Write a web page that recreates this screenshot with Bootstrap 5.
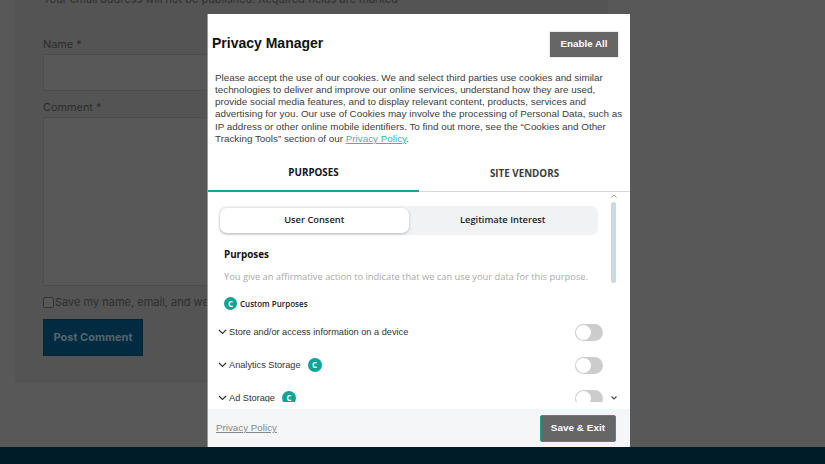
<!DOCTYPE html>
<html lang="en">
<head>
<meta charset="utf-8">
<title>Privacy Manager</title>
<link href="https://cdn.jsdelivr.net/npm/bootstrap@5.3.0/dist/css/bootstrap.min.css" rel="stylesheet">
<style>
html,body{height:100%}
body{background:#585858;overflow:hidden;font-family:"Inter","Liberation Sans",sans-serif;color:#2f2f2f}
.page-shell{height:464px;display:flex;flex-direction:column;overflow:hidden}
.page-main{flex:1 1 auto;min-height:0;overflow:hidden;padding-left:15px}
.comment-panel{width:593px;height:383px;background:#545454;padding:0 28px;display:flex;flex-direction:column}
.email-note{font-size:11px;line-height:16px;margin-top:-9px;margin-bottom:0;white-space:nowrap;height:16px}
.form-label-dim{font-size:10.9px;line-height:16px;margin:0 0 2px;color:#2c2c2c}
.form-label-name{margin-top:29px}
.form-label-comment{margin-top:8px}
.dim-input{height:37px;width:100%;background:#585858;border:1px solid #4c4c4c;border-radius:2px}
.dim-area{height:169px}
.save-line{display:flex;align-items:center;gap:1px;margin-top:8px;font-size:11px;line-height:16px;white-space:nowrap;overflow:hidden}
.dim-box{width:11px;height:11px;border:1px solid #333;border-radius:2px;flex:none;background:#585858}
.post-btn{margin-top:9px;width:100px;height:37px;background:#002b40;border:1px solid #00263a;color:#57656d;font-weight:700;font-size:11px;display:flex;align-items:center;justify-content:center}
.site-foot{height:17px;flex:none;background:#001c29}
.pm-modal{position:fixed;left:207px;top:14px;width:423px;height:433px;background:#fff;border-left:1px solid #9a9a9a;display:flex;flex-direction:column;font-family:"Liberation Sans",sans-serif;overflow:hidden}
.pm-head{display:flex;justify-content:space-between;align-items:center;padding:18px 12px 0 4px;height:43px}
.pm-title{font-size:14px;font-weight:700;color:#111;margin:0 0 2px}
.btn-enable{width:68px;height:25px;background:#666;color:#fff;border:0;border-radius:0;font-size:9.8px;font-weight:700;padding:0;box-shadow:0 0 1px #888}
.pm-intro{margin:15px 4px 0 7px;font-size:9.85px;line-height:12.15px;color:#3d3d3d}
.pm-intro a{color:#3bb8ac}
.pm-tabs{display:flex;margin-top:13px;height:34px;border-bottom:1px solid #d8d8d8;font-family:"Open Sans",sans-serif;font-weight:700;font-size:9.8px}
.pm-tab{flex:0 0 50%;display:flex;align-items:center;justify-content:center;color:#3c3c3c;padding-bottom:1px}
.pm-tab-on{color:#111;border-bottom:2px solid #17a398;margin-bottom:-1px}
.pm-body{position:relative;height:217px;flex:none;overflow:hidden;padding:14px 32px 0 11px}
.seg-wrap{display:flex;height:29px;background:#f0f2f4;border-radius:7px;padding:2px 1px;font-family:"Open Sans",sans-serif;font-weight:600;font-size:9.3px;color:#222}
.seg-item{flex:1 1 50%;display:flex;align-items:center;justify-content:center}
.seg-on{background:#fff;border-radius:7px;box-shadow:0 1px 3px rgba(0,0,0,.25)}
.pur-title{font-family:"Open Sans",sans-serif;font-weight:700;font-size:9.8px;line-height:14px;color:#111;margin:13px 0 0 5px}
.pur-desc{font-family:"Open Sans",sans-serif;font-size:9.3px;line-height:14px;color:#aaa;margin:8px 0 0 5px;white-space:nowrap}
.pur-custom{display:flex;align-items:center;gap:3px;margin:13px 0 0 5px;font-family:"Open Sans",sans-serif;font-weight:600;font-size:8px;color:#222;height:14px}
.c-mark{width:14px;height:14px;border-radius:50%;background:#0aa595;color:#fff;display:inline-flex;align-items:center;justify-content:center;font-family:"Open Sans",sans-serif;font-weight:700;font-size:8px;flex:none}
.pur-custom .c-mark{width:13px;height:13px}
.pur-row{display:flex;align-items:center;height:17px;margin-top:16px;margin-right:-6px;font-size:9.2px;color:#333;margin-left:-1px}
.pur-row-first{margin-top:13px}
.pur-label{display:flex;align-items:center;gap:2px;flex:1 1 auto}
.pur-label .c-mark{margin-left:5px}
.tgl{width:28px;height:17px;background:#ccc;border-radius:9px;position:relative;flex:none;margin-right:1px}
.tgl::after{content:"";position:absolute;left:1px;top:1px;width:15px;height:15px;border-radius:50%;background:#fff}
.pm-clip{position:absolute;left:0;right:0;bottom:0;height:7px;background:#fff}
.sb-thumb{position:absolute;left:403px;top:10px;width:5px;height:81px;background:#cbd7e2;border-radius:3px}
.sb-up{position:absolute;left:403px;top:2px}
.sb-down{position:absolute;left:403px;bottom:9px}
.pm-foot{flex:1 1 auto;background:#f5f6f8;display:flex;align-items:center;justify-content:space-between;padding:1px 14px 0 8px}
.pm-foot a{color:#888;font-size:9.8px}
.btn-save{width:76px;height:27px;background:#666;color:#fff;border:1px solid #1f9e92;border-radius:2px;font-size:9.8px;font-weight:700;padding:0;letter-spacing:.1px}
</style>
</head>
<body>
<div class="page-shell">
  <main class="page-main">
    <section class="comment-panel">
      <p class="email-note">Your email address will not be published. Required fields are marked *</p>
      <p class="form-label-dim form-label-name">Name *</p>
      <div class="dim-input"></div>
      <p class="form-label-dim form-label-comment">Comment *</p>
      <div class="dim-input dim-area"></div>
      <div class="save-line"><span class="dim-box"></span><span>Save my name, email, and website in this browser for the next time I comment.</span></div>
      <div class="post-btn">Post Comment</div>
    </section>
  </main>
  <footer class="site-foot"></footer>
</div>

<div class="pm-modal" role="dialog">
  <div class="pm-head">
    <h1 class="pm-title">Privacy Manager</h1>
    <button class="btn btn-enable" type="button">Enable All</button>
  </div>
  <p class="pm-intro">Please accept the use of our cookies. We and select third parties use cookies and similar technologies to deliver and improve our online services, understand how they are used, provide social media features, and to display relevant content, products, services and advertising for you. Our use of Cookies may involve the processing of Personal Data, such as IP address or other online mobile identifiers. To find out more, see the “Cookies and Other Tracking Tools” section of our <a href="#">Privacy Policy</a>.</p>
  <div class="pm-tabs">
    <div class="pm-tab pm-tab-on">PURPOSES</div>
    <div class="pm-tab">SITE VENDORS</div>
  </div>
  <div class="pm-body">
    <div class="seg-wrap">
      <div class="seg-item seg-on">User Consent</div>
      <div class="seg-item">Legitimate Interest</div>
    </div>
    <div class="pur-title">Purposes</div>
    <div class="pur-desc">You give an affirmative action to indicate that we can use your data for this purpose.</div>
    <div class="pur-custom"><span class="c-mark">C</span>Custom Purposes</div>
    <div class="pur-row pur-row-first">
      <div class="pur-label"><svg width="9" height="6" viewBox="0 0 9 6"><path d="M1 1l3.500 3.500L8 1" fill="none" stroke="#333" stroke-width="1.2"/></svg>Store and/or access information on a device</div>
      <span class="tgl"></span>
    </div>
    <div class="pur-row">
      <div class="pur-label"><svg width="9" height="6" viewBox="0 0 9 6"><path d="M1 1l3.500 3.500L8 1" fill="none" stroke="#333" stroke-width="1.2"/></svg>Analytics Storage <span class="c-mark">C</span></div>
      <span class="tgl"></span>
    </div>
    <div class="pur-row">
      <div class="pur-label"><svg width="9" height="6" viewBox="0 0 9 6"><path d="M1 1l3.500 3.500L8 1" fill="none" stroke="#333" stroke-width="1.2"/></svg>Ad Storage <span class="c-mark">C</span></div>
      <span class="tgl"></span>
    </div>
    <div class="pm-clip"></div>
    <svg class="sb-up" width="6" height="4" viewBox="0 0 6 4"><path d="M.5 3.500L3 1l2.500 2.500" fill="none" stroke="#999" stroke-width="1"/></svg>
    <div class="sb-thumb"></div>
    <svg class="sb-down" width="6" height="4" viewBox="0 0 6 4"><path d="M.5 .5L3 3 5.500 .5" fill="none" stroke="#444" stroke-width="1.1"/></svg>
  </div>
  <div class="pm-foot">
    <a href="#">Privacy Policy</a>
    <button class="btn btn-save" type="button">Save &amp; Exit</button>
  </div>
</div>
<script src="https://cdn.jsdelivr.net/npm/bootstrap@5.3.0/dist/js/bootstrap.bundle.min.js"></script>
</body>
</html>
